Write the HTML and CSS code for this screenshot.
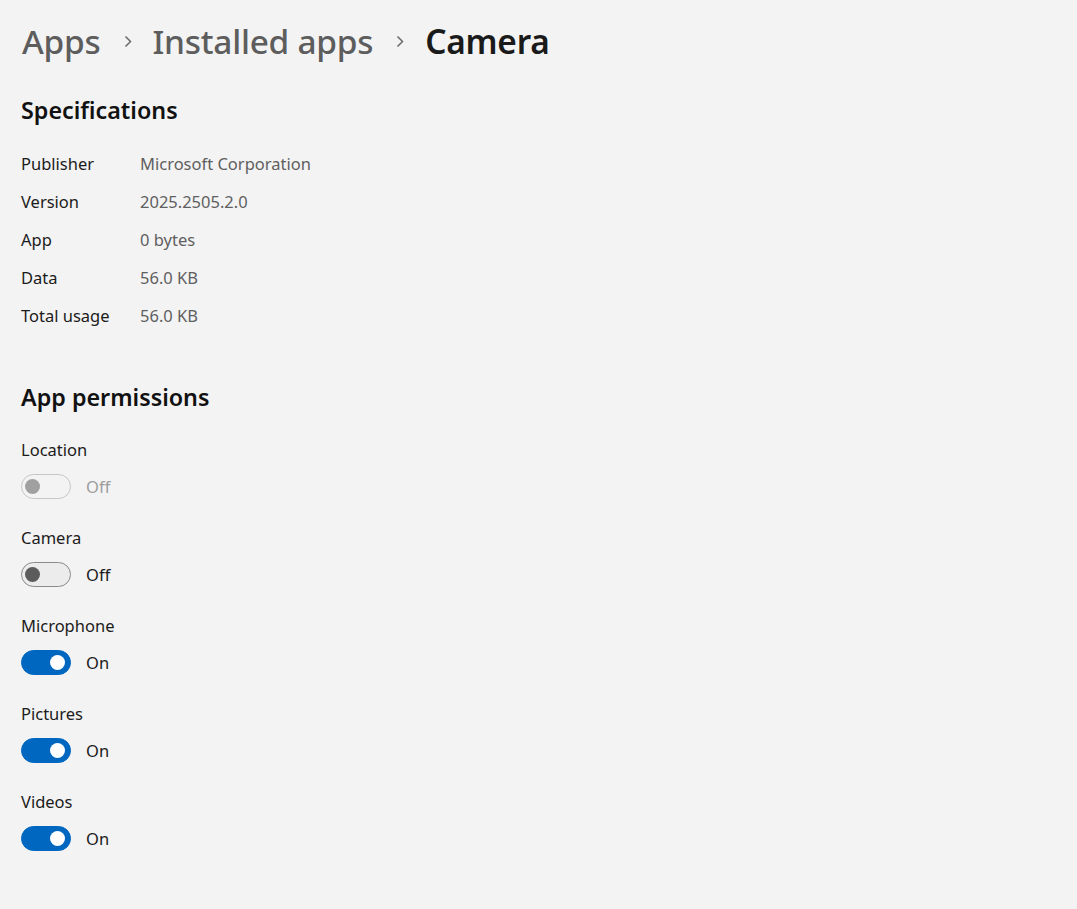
FILE: index.html
```html
<!DOCTYPE html>
<html lang="en">
<head>
<meta charset="utf-8">
<title>Camera - Installed apps</title>
<link rel="stylesheet" href="styles.css">
</head>
<body>
<main class="page">
  <nav class="crumbs">
    <span class="crumb">Apps</span>
    <svg class="chev" viewBox="0 0 8 13" width="8" height="13"><polyline points="1.5,1.5 6.5,6.5 1.5,11.5" fill="none" stroke="#6b6b6b" stroke-width="1.5"/></svg>
    <span class="crumb">Installed apps</span>
    <svg class="chev" viewBox="0 0 8 13" width="8" height="13"><polyline points="1.5,1.5 6.5,6.5 1.5,11.5" fill="none" stroke="#6b6b6b" stroke-width="1.5"/></svg>
    <span class="crumb current">Camera</span>
  </nav>

  <section class="specs">
    <h2 class="section-title">Specifications</h2>
    <dl class="spec-list">
      <div class="spec-row"><dt>Publisher</dt><dd>Microsoft Corporation</dd></div>
      <div class="spec-row"><dt>Version</dt><dd>2025.2505.2.0</dd></div>
      <div class="spec-row"><dt>App</dt><dd>0 bytes</dd></div>
      <div class="spec-row"><dt>Data</dt><dd>56.0 KB</dd></div>
      <div class="spec-row"><dt>Total usage</dt><dd>56.0 KB</dd></div>
    </dl>
  </section>

  <section class="perms">
    <h2 class="section-title">App permissions</h2>
    <div class="perm">
      <div class="perm-label">Location</div>
      <div class="toggle-row disabled">
        <span class="toggle"><span class="knob"></span></span>
        <span class="state">Off</span>
      </div>
    </div>
    <div class="perm">
      <div class="perm-label">Camera</div>
      <div class="toggle-row">
        <span class="toggle"><span class="knob"></span></span>
        <span class="state">Off</span>
      </div>
    </div>
    <div class="perm">
      <div class="perm-label">Microphone</div>
      <div class="toggle-row">
        <span class="toggle on"><span class="knob"></span></span>
        <span class="state">On</span>
      </div>
    </div>
    <div class="perm">
      <div class="perm-label">Pictures</div>
      <div class="toggle-row">
        <span class="toggle on"><span class="knob"></span></span>
        <span class="state">On</span>
      </div>
    </div>
    <div class="perm">
      <div class="perm-label">Videos</div>
      <div class="toggle-row">
        <span class="toggle on"><span class="knob"></span></span>
        <span class="state">On</span>
      </div>
    </div>
  </section>
</main>
</body>
</html>
```

FILE: styles.css
```css
html, body {
  margin: 0;
  padding: 0;
  background: #f3f3f3;
}

body {
  font-family: "Noto Sans", "Open Sans", sans-serif;
  color: #1b1b1b;
  font-size: 16.5px;
}

.page {
  padding: 17px 21px 40px 21px;
}

/* breadcrumb header */
.crumbs {
  display: flex;
  align-items: center;
  height: 48px;
}

.crumb {
  font-size: 33.4px;
  font-weight: 500;
  line-height: 48px;
  color: #5d5d5d;
  letter-spacing: -0.25px;
}

.crumb:first-child {
  margin-left: 1px;
}

.crumb.current {
  color: #1a1a1a;
  font-weight: 600;
}

.chev {
  margin: 0 21px 0 23px;
}

.section-title {
  margin: 0;
  font-size: 23.3px;
  font-weight: 600;
  line-height: 34px;
  color: #111;
}

.specs {
  margin-top: 28px;
}

.spec-list {
  margin: 17px 0 0 0;
  display: flex;
  flex-direction: column;
}

.spec-row {
  display: flex;
  height: 38px;
  align-items: center;
}

.spec-row dt {
  width: 119px;
  color: #1b1b1b;
}

.spec-row dd {
  margin: 0;
  color: #5f5f5f;
}

.perms {
  margin-top: 46px;
}

.perms .section-title {
  margin-bottom: 24px;
}

.perm {
  display: flex;
  flex-direction: column;
  gap: 11px;
  margin-bottom: 27px;
}

.perm-label {
  line-height: 24px;
}

.toggle-row {
  display: flex;
  align-items: center;
  height: 26px;
  gap: 15px;
}

/* switch track and thumb */
.toggle {
  box-sizing: border-box;
  width: 50px;
  height: 25px;
  border-radius: 13px;
  border: 1px solid #8a8a8a;
  background: #ececec;
  display: flex;
  align-items: center;
  padding-left: 3px;
}

.knob {
  width: 15px;
  height: 15px;
  border-radius: 50%;
  background: #5c5c5c;
}

.toggle.on {
  background: #0067c0;
  border-color: #0067c0;
  justify-content: flex-end;
  padding: 0 5px 0 0;
}

.toggle.on .knob {
  background: #fff;
}

.toggle-row.disabled .toggle {
  border-color: #c6c6c6;
  background: #f3f3f3;
}

.toggle-row.disabled .knob {
  background: #a0a0a0;
}

.toggle-row.disabled .state {
  color: #9e9e9e;
}
```
